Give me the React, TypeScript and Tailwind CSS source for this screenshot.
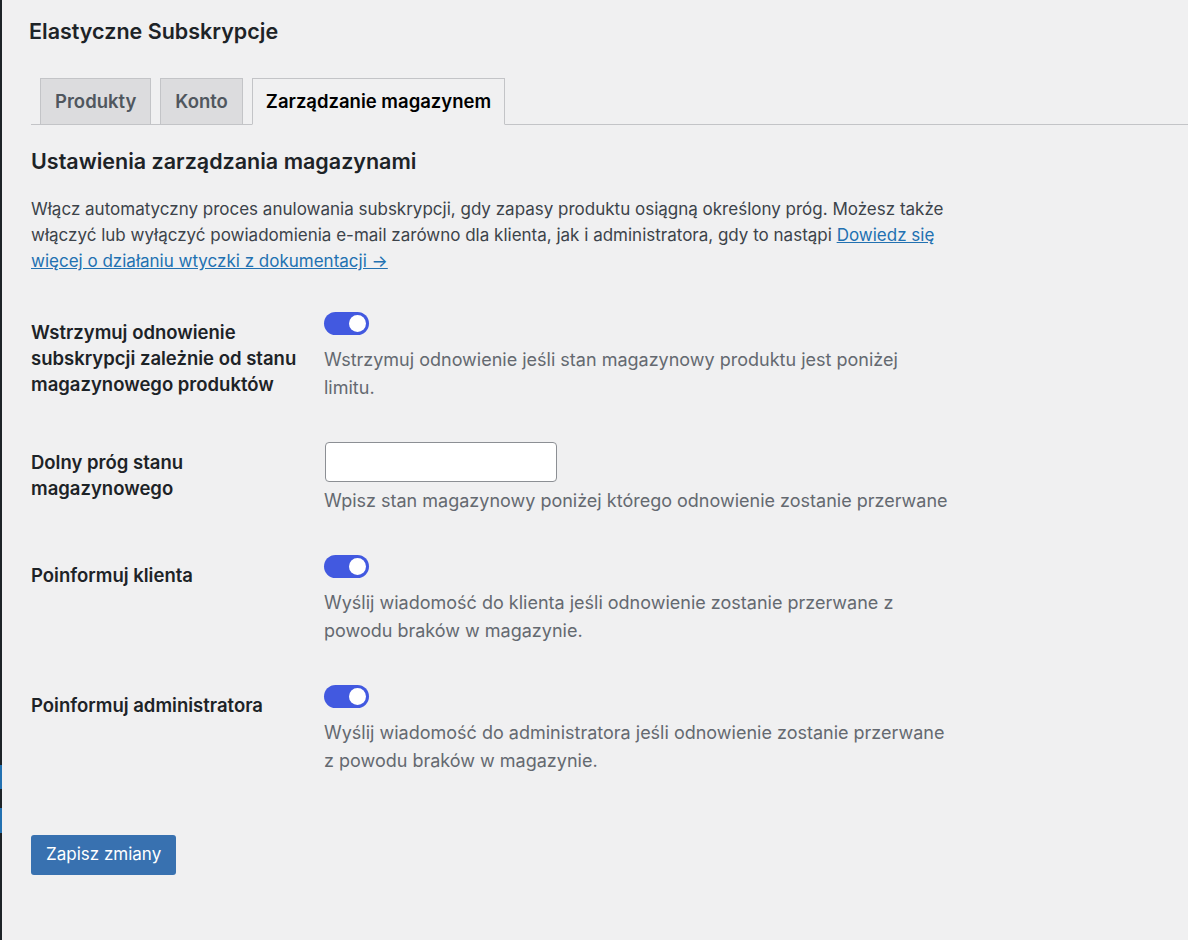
import React from 'react';

const font = { fontFamily: 'Inter, "Noto Sans", sans-serif' };

type Row = {
  label: string[];
  control: 'toggle' | 'input';
  description: string[];
};

const rows: Row[] = [
  {
    label: ['Wstrzymuj odnowienie', 'subskrypcji zależnie od stanu', 'magazynowego produktów'],
    control: 'toggle',
    description: ['Wstrzymuj odnowienie jeśli stan magazynowy produktu jest poniżej', 'limitu.'],
  },
  {
    label: ['Dolny próg stanu', 'magazynowego'],
    control: 'input',
    description: ['Wpisz stan magazynowy poniżej którego odnowienie zostanie przerwane'],
  },
  {
    label: ['Poinformuj klienta'],
    control: 'toggle',
    description: ['Wyślij wiadomość do klienta jeśli odnowienie zostanie przerwane z', 'powodu braków w magazynie.'],
  },
  {
    label: ['Poinformuj administratora'],
    control: 'toggle',
    description: ['Wyślij wiadomość do administratora jeśli odnowienie zostanie przerwane', 'z powodu braków w magazynie.'],
  },
];

const Lines: React.FC<{ lines: string[] }> = ({ lines }) => (
  <>
    {lines.map((line, i) => (
      <span key={i} className="block whitespace-nowrap">
        {line}
      </span>
    ))}
  </>
);

const Toggle: React.FC = () => (
  <button
    type="button"
    className="relative block h-[23px] w-[45px] rounded-full bg-[#4259e0]"
    aria-pressed="true"
  >
    <span className="absolute right-[3px] top-[3px] h-[17px] w-[17px] rounded-full bg-white" />
  </button>
);

const App: React.FC = () => {
  return (
    <div className="flex min-h-[940px] bg-[#f0f0f1] text-[#1d2327]" style={font}>
      {/* edge of the admin menu */}
      <div className="flex w-[2px] shrink-0 flex-col bg-[#1d2327]">
        <div className="h-[765px]" />
        <div className="h-[24px] bg-[#2271b1]" />
        <div className="h-[19px]" />
        <div className="h-[25px] bg-[#2271b1]" />
      </div>

      <div className="flex-1 pl-[27px] pt-[19px]">
        <h1 className="text-[21.5px] font-semibold leading-[24px]">Elastyczne Subskrypcje</h1>

        <nav className="ml-[2px] mt-[35px] flex items-end gap-[9px] border-b border-[#c3c4c7] pl-[9px]">
          <a className="-mb-px flex h-[47px] items-center border border-[#c3c4c7] bg-[#dcdcde] px-[14px] text-[18.5px] font-semibold text-[#50575e]">
            Produkty
          </a>
          <a className="-mb-px flex h-[47px] items-center border border-[#c3c4c7] bg-[#dcdcde] px-[14px] text-[18.5px] font-semibold text-[#50575e]">
            Konto
          </a>
          <a className="-mb-px flex h-[47px] items-center border border-[#c3c4c7] border-b-[#f0f0f1] bg-[#f0f0f1] px-[13px] text-[18.5px] font-semibold text-black">
            Zarządzanie magazynem
          </a>
        </nav>

        <div className="pl-[2px]">
          <h2 className="mt-[23px] text-[21.5px] font-semibold leading-[26px]">Ustawienia zarządzania magazynami</h2>

          <p className="mt-[22px] text-[17px] leading-[26px] text-[#3c434a]">
            <span className="block whitespace-nowrap">
              Włącz automatyczny proces anulowania subskrypcji, gdy zapasy produktu osiągną określony próg. Możesz także
            </span>
            <span className="block whitespace-nowrap">
              włączyć lub wyłączyć powiadomienia e-mail zarówno dla klienta, jak i administratora, gdy to nastąpi{' '}
              <a href="#" className="text-[#2271b1] underline">
                Dowiedz się
              </a>
            </span>
            <a href="#" className="block whitespace-nowrap text-[#2271b1]">
              <span className="underline">więcej o działaniu wtyczki z dokumentacji →</span>
            </a>
          </p>

          <div className="mt-[38px] flex flex-col gap-[40px]">
            {rows.map((row) => (
              <div key={row.label.join(' ')} className="grid grid-cols-[293px_1fr]">
                <div className="pt-[7px] text-[18.5px] font-semibold leading-[26px]">
                  <Lines lines={row.label} />
                </div>
                <div>
                  {row.control === 'toggle' ? (
                    <Toggle />
                  ) : (
                    <input
                      type="text"
                      className="ml-px block h-[40px] w-[232px] rounded-[4px] border border-[#8c8f94] bg-white"
                    />
                  )}
                  <p
                    className={`${row.control === 'toggle' ? 'mt-[11px]' : 'mt-[5px]'} text-[18px] leading-[28px] text-[#646970]`}
                  >
                    <Lines lines={row.description} />
                  </p>
                </div>
              </div>
            ))}
          </div>

          <button
            type="button"
            className="mt-[60px] h-[40px] rounded-[3px] bg-[#3871b0] px-[15px] text-[17px] text-white"
          >
            Zapisz zmiany
          </button>
        </div>
      </div>
    </div>
  );
};

export default App;
